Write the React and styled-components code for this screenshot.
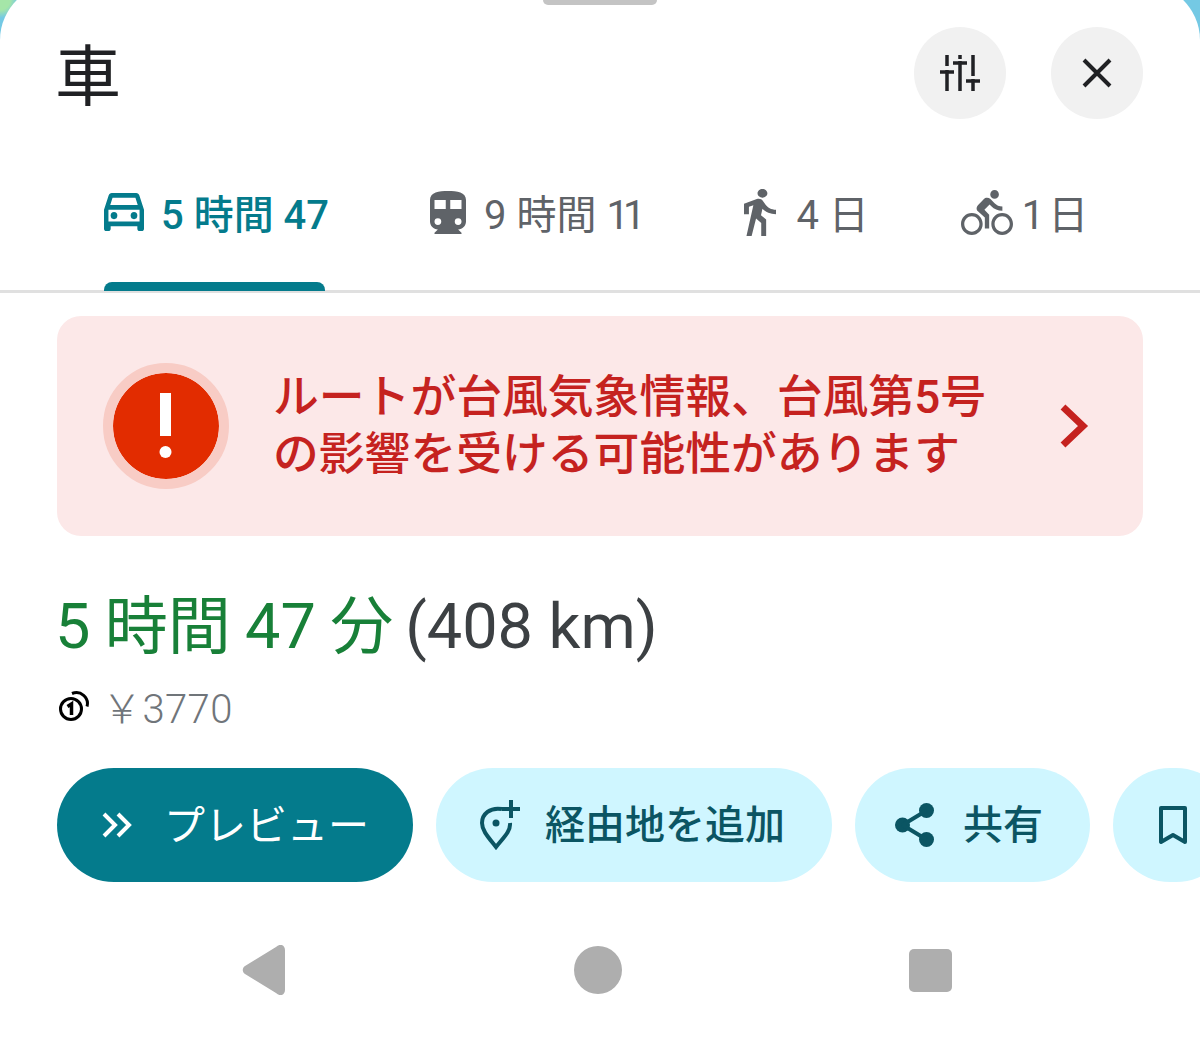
import styled, { createGlobalStyle } from "styled-components";

const GlobalStyle = createGlobalStyle`
  html, body {
    margin: 0;
    padding: 0;
    background: #fff;
  }
  * {
    box-sizing: border-box;
  }
`;

const Page = styled.div`
  width: 1200px;
  height: 1037px;
  overflow: hidden;
  background: radial-gradient(circle at 0 0, #a5e6a8 0 10px, #74c9e4 18px);
  font-family: Roboto, "Noto Sans CJK JP", sans-serif;
`;

/* the sheet's top edge sits above the screen, only part of the corner curve shows */
const Sheet = styled.div`
  height: calc(100% + 20px);
  margin-top: -20px;
  background: #fff;
  border-radius: 66px 66px 0 0 / 60px 60px 0 0;
  overflow: hidden;
`;

const HandleRow = styled.div`
  display: flex;
  justify-content: center;
  height: 47px;
  padding-top: 20px;
`;

const Handle = styled.div`
  width: 114px;
  height: 5px;
  background: #c4c4c4;
  border-radius: 0 0 5px 5px;
`;

const Header = styled.div`
  display: flex;
  align-items: center;
  justify-content: space-between;
  padding: 0 57px 0 55px;
`;

const Title = styled.h1`
  height: 92px;
  margin: 0;
  padding-top: 5px;
  font-size: 66px;
  font-weight: 400;
  line-height: 92px;
  color: #202124;
`;

const HeaderActions = styled.div`
  display: flex;
  gap: 45px;
`;

const RoundButton = styled.div`
  display: flex;
  align-items: center;
  justify-content: center;
  width: 92px;
  height: 92px;
  border-radius: 50%;
  background: #f1f1f1;
`;

const Tabs = styled.div`
  display: flex;
  align-items: flex-start;
  height: 174px;
  padding: 70px 0 0 104px;
  border-bottom: 3px solid #e0e0e0;
`;

const Tab = styled.div`
  display: flex;
  flex-direction: column;
  margin-right: ${(p) => p.$after}px;
`;

const TabLabel = styled.div`
  display: flex;
  align-items: center;
  gap: ${(p) => p.$gap}px;
  height: 46px;
  font-size: 40px;
  font-weight: ${(p) => (p.$active ? 500 : 400)};
  color: ${(p) => (p.$active ? "#047b8c" : "#5f6368")};
  white-space: pre;
`;

const TightDigits = styled.span`
  letter-spacing: ${(p) => p.$spacing}px;
`;

const Indicator = styled.div`
  width: 221px;
  height: 9px;
  margin-top: 47px;
  background: #047b8c;
  border-radius: 8px 8px 0 0;
`;

const Alert = styled.div`
  display: flex;
  align-items: center;
  height: 220px;
  margin: 23px 57px 0;
  padding: 0 54px 0 46px;
  background: #fce8e8;
  border-radius: 24px;
`;

const AlertBadge = styled.div`
  flex: none;
  display: flex;
  align-items: center;
  justify-content: center;
  width: 126px;
  height: 126px;
  border-radius: 50%;
  background: #e22c00;
  border: 10px solid #f8ccc5;
  background-clip: padding-box;
`;

const AlertText = styled.div`
  flex: 1;
  margin-left: 44px;
  font-size: 45.8px;
  line-height: 57px;
  font-weight: 500;
  color: #c5221f;
`;

const Summary = styled.div`
  display: flex;
  align-items: baseline;
  gap: 12px;
  height: 90px;
  margin: 46px 0 0 55px;
  line-height: 90px;
  white-space: nowrap;
`;

const Duration = styled.span`
  font-size: 63px;
  word-spacing: -1.3px;
  color: #188038;
`;

const Distance = styled.span`
  font-size: 63px;
  color: #3c4043;
`;

const Toll = styled.div`
  display: flex;
  align-items: center;
  gap: 12px;
  height: 46px;
  margin: 11px 0 0 58px;
  font-size: 40px;
  font-weight: 300;
  letter-spacing: 0.4px;
  color: #70757a;
`;

const Actions = styled.div`
  display: flex;
  gap: 23px;
  margin: 39px 0 0 57px;
`;

const Pill = styled.div`
  flex: none;
  display: flex;
  align-items: center;
  gap: ${(p) => p.$gap}px;
  width: ${(p) => p.$w}px;
  height: 114px;
  padding-left: ${(p) => p.$pad}px;
  border-radius: 57px;
  font-size: ${(p) => (p.$primary ? 41 : 40)}px;
  font-weight: ${(p) => (p.$primary ? 400 : 500)};
  background: ${(p) => (p.$primary ? "#047b8c" : "#cff6ff")};
  color: ${(p) => (p.$primary ? "#fff" : "#0b5563")};
  white-space: nowrap;
`;

const PillLabel = styled.span`
  margin-bottom: 7px;
`;

const NavBar = styled.div`
  display: flex;
  align-items: center;
  justify-content: center;
  height: 56px;
  margin-top: 60px;
  padding-right: 4px;
`;

const NavSlot = styled.div`
  display: flex;
  justify-content: center;
  width: 332px;
  padding-right: ${(p) => p.$nudge || 0}px;
`;

const CarIcon = () => (
  <svg width="40" height="38" viewBox="3 4 18 16" preserveAspectRatio="none" fill="#047b8c">
    <path d="M18.92 5.01C18.72 4.42 18.16 4 17.5 4h-11c-.66 0-1.21.42-1.42 1.01L3 11v8c0 .55.45 1 1 1h1c.55 0 1-.45 1-1v-1h12v1c0 .55.45 1 1 1h1c.55 0 1-.45 1-1v-8l-2.08-5.99zM6.85 6h10.29l1.04 3H5.81l1.04-3zM19 16H5v-5h14v5z" />
    <circle cx="7.5" cy="13.5" r="1.5" />
    <circle cx="16.5" cy="13.5" r="1.5" />
  </svg>
);

const TrainIcon = () => (
  <svg width="36" height="43" viewBox="4 2 16 19" preserveAspectRatio="none" fill="#5f6368">
    <path d="M12 2C8 2 4 2.5 4 6v9.5C4 17.43 5.57 19 7.5 19L6 20.5v.5h12v-.5L16.500 19c1.930 0 3.500-1.570 3.500-3.500V6c0-3.500-4-4-8-4zM11 10H6V6h5v4zm7 0h-5V6h5v4zM7.500 17a1.500 1.500 0 1 1 0-3 1.500 1.500 0 0 1 0 3zm9 0a1.500 1.500 0 1 1 0-3 1.500 1.500 0 0 1 0 3z" />
  </svg>
);

const WalkIcon = () => (
  <svg width="32" height="47" viewBox="6 1.5 13 21.5" preserveAspectRatio="none" fill="#5f6368">
    <path d="M13.500 5.500c1.100 0 2-.9 2-2s-.9-2-2-2-2 .9-2 2 .9 2 2 2zM9.800 8.900 7 23h2.100l1.800-8 2.100 2v6h2v-7.500l-2.100-2 .6-3C14.800 12 16.800 13 19 13v-2c-1.900 0-3.500-1-4.300-2.400l-1-1.600c-.4-.6-1-1-1.700-1-.3 0-.5.100-.8.100L6 8.300V13h2V9.600l1.800-.7" />
  </svg>
);

const BikeIcon = () => (
  <svg width="52" height="45" viewBox="0 1.5 24 20.5" preserveAspectRatio="none" fill="#5f6368">
    <path d="M15.500 5.500c1.100 0 2-.9 2-2s-.9-2-2-2-2 .9-2 2 .9 2 2 2zM5 12c-2.800 0-5 2.200-5 5s2.200 5 5 5 5-2.200 5-5-2.200-5-5-5zm0 8.500c-1.900 0-3.500-1.600-3.500-3.500s1.600-3.500 3.500-3.500 3.500 1.600 3.500 3.500-1.600 3.500-3.500 3.500zm5.800-10 2.400-2.400.8.800c1.300 1.300 3 2.100 5.100 2.100V9c-1.500 0-2.700-.6-3.600-1.500l-1.900-1.900c-.5-.4-1-.6-1.600-.6s-1.100.2-1.400.6L7.800 8.400c-.4.400-.6.900-.6 1.400 0 .6.200 1.100.6 1.400L11 14v5h2v-6.200l-2.200-2.300zM19 12c-2.800 0-5 2.200-5 5s2.200 5 5 5 5-2.200 5-5-2.200-5-5-5zm0 8.500c-1.900 0-3.500-1.600-3.500-3.500s1.600-3.500 3.500-3.500 3.500 1.600 3.500 3.500-1.600 3.500-3.500 3.500z" />
  </svg>
);

const TuneIcon = () => (
  <svg width="40" height="36" viewBox="0 0 40 36" fill="none" stroke="#202124" strokeWidth="3.5">
    <path d="M7 0v11M7 15v21M0 17h14M20 0v4M20 6v30M13 8h14M33 0v21M33 24v12M26 26h14" />
  </svg>
);

const CloseIcon = () => (
  <svg width="32" height="32" viewBox="0 0 32 32" fill="none" stroke="#202124" strokeWidth="4">
    <path d="M3 3l26 26M29 3 3 29" />
  </svg>
);

const ExclamationIcon = () => (
  <svg width="28" height="66" viewBox="0 0 28 66" fill="#fff">
    <rect x="8" y="0" width="11" height="43" />
    <circle cx="13.500" cy="59" r="6" />
  </svg>
);

const ChevronIcon = () => (
  <svg width="30" height="44" viewBox="0 0 30 44" fill="none" stroke="#c5221f" strokeWidth="7">
    <path d="M4 3l20 19L4 41" />
  </svg>
);

const TollIcon = () => (
  <svg width="32" height="32" viewBox="0 0 32 32" fill="none" stroke="#000" strokeWidth="3">
    <circle cx="13" cy="19" r="10.500" />
    <path d="M14 3.500a11 11 0 0 1 15 13" />
    <path d="M9.500 16.500l4-2.500v11" strokeWidth="3.500" />
  </svg>
);

const ForwardIcon = () => (
  <svg width="30" height="26" viewBox="0 0 30 26" fill="none" stroke="#fff" strokeWidth="4">
    <path d="M2 2l11 11L2 24M16 2l11 11-11 11" />
  </svg>
);

const AddStopIcon = () => (
  <svg width="44" height="50" viewBox="0 0 44 50" fill="none" stroke="#0b5563" strokeWidth="4">
    <path d="M24 9C12 7 4 14 4 23c0 8 7 15 14 24 7-9 15-16 14-24" />
    <circle cx="18" cy="23" r="3.500" fill="#0b5563" stroke="none" />
    <path d="M33 0v18M24 9h18" />
  </svg>
);

const ShareIcon = () => (
  <svg width="39" height="44" viewBox="0 0 39 44" fill="#0b5563">
    <circle cx="31.500" cy="7.500" r="7.500" />
    <circle cx="7.500" cy="22" r="7.500" />
    <circle cx="31.500" cy="36.500" r="7.500" />
    <path d="M7.500 22l24-14.500M7.500 22l24 14.500" stroke="#0b5563" strokeWidth="4" />
  </svg>
);

const BookmarkIcon = () => (
  <svg width="30" height="40" viewBox="0 0 30 40" fill="none" stroke="#0b5563" strokeWidth="4" strokeLinejoin="round">
    <path d="M3 3h24v34l-12-7-12 7z" />
  </svg>
);

const BackIcon = () => (
  <svg width="44" height="50" viewBox="0 0 44 50" fill="#aeaeae">
    <path d="M34 2c4-4 9-2 9 3v40c0 5-5 7-9 3L3 29c-3-2-3-6 0-8z" />
  </svg>
);

const HomeIcon = () => (
  <svg width="48" height="48" viewBox="0 0 48 48" fill="#aeaeae">
    <circle cx="24" cy="24" r="24" />
  </svg>
);

const RecentsIcon = () => (
  <svg width="43" height="43" viewBox="0 0 43 43" fill="#aeaeae">
    <rect width="43" height="43" rx="5" />
  </svg>
);

export default function App() {
  return (
    <>
      <GlobalStyle />
      <Page>
        <Sheet>
          <HandleRow>
            <Handle />
          </HandleRow>
          <Header>
            <Title>車</Title>
            <HeaderActions>
              <RoundButton>
                <TuneIcon />
              </RoundButton>
              <RoundButton>
                <CloseIcon />
              </RoundButton>
            </HeaderActions>
          </Header>
          <Tabs>
            <Tab $after={101}>
              <TabLabel $active $gap={17}>
                <CarIcon />
                <span>5 時間 47</span>
              </TabLabel>
              <Indicator />
            </Tab>
            <Tab $after={105}>
              <TabLabel $gap={18}>
                <TrainIcon />
                <span>
                  9 時間 <TightDigits $spacing={-6}>11</TightDigits>
                </span>
              </TabLabel>
            </Tab>
            <Tab $after={92}>
              <TabLabel $gap={20}>
                <WalkIcon />
                <span>4 日</span>
              </TabLabel>
            </Tab>
            <Tab $after={0}>
              <TabLabel $gap={9}>
                <BikeIcon />
                <span>
                  <TightDigits $spacing={-3}>1 </TightDigits>日
                </span>
              </TabLabel>
            </Tab>
          </Tabs>
          <Alert>
            <AlertBadge>
              <ExclamationIcon />
            </AlertBadge>
            <AlertText>
              ルートが台風気象情報、台風第5号
              <br />
              の影響を受ける可能性があります
            </AlertText>
            <ChevronIcon />
          </Alert>
          <Summary>
            <Duration>5 時間 47 分</Duration>
            <Distance>(408 km)</Distance>
          </Summary>
          <Toll>
            <TollIcon />
            ￥3770
          </Toll>
          <Actions>
            <Pill $primary $w={356} $pad={45} $gap={32}>
              <ForwardIcon />
              <PillLabel>プレビュー</PillLabel>
            </Pill>
            <Pill $w={396} $pad={42} $gap={23}>
              <AddStopIcon />
              <PillLabel>経由地を追加</PillLabel>
            </Pill>
            <Pill $w={235} $pad={40} $gap={29}>
              <ShareIcon />
              <PillLabel>共有</PillLabel>
            </Pill>
            <Pill $w={120} $pad={45} $gap={0}>
              <BookmarkIcon />
            </Pill>
          </Actions>
          <NavBar>
            <NavSlot $nudge={4}>
              <BackIcon />
            </NavSlot>
            <NavSlot>
              <HomeIcon />
            </NavSlot>
            <NavSlot>
              <RecentsIcon />
            </NavSlot>
          </NavBar>
        </Sheet>
      </Page>
    </>
  );
}
